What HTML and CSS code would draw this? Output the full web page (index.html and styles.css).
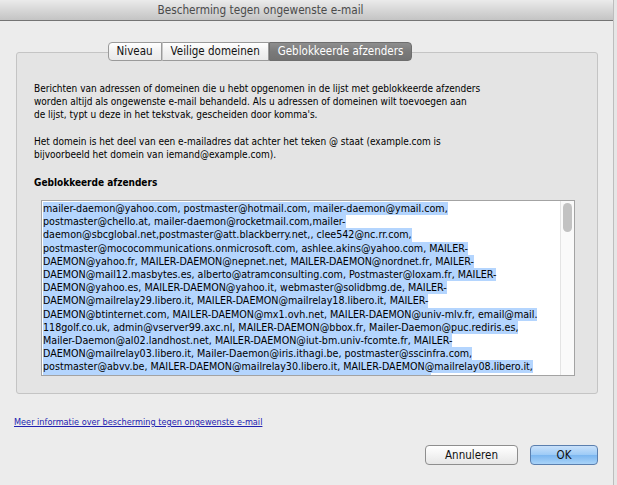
FILE: index.html
```html
<!DOCTYPE html>
<html>
<head>
<meta charset="utf-8">
<link rel="stylesheet" href="styles.css">
</head>
<body>
<div class="window">
  <div class="titlebar">Bescherming tegen ongewenste e-mail</div>
  <div class="content">
    <div class="tabbox">
      <div class="tabs">
        <div class="tab tab-first">Niveau</div>
        <div class="tab">Veilige domeinen</div>
        <div class="tab tab-selected">Geblokkeerde afzenders</div>
      </div>
      <div class="panel">
        <p class="text">Berichten van adressen of domeinen die u hebt opgenomen in de lijst met geblokkeerde afzenders<br>worden altijd als ongewenste e-mail behandeld. Als u adressen of domeinen wilt toevoegen aan<br>de lijst, typt u deze in het tekstvak, gescheiden door komma's.</p>
        <p class="text">Het domein is het deel van een e-mailadres dat achter het teken @ staat (example.com is<br>bijvoorbeeld het domein van iemand@example.com).</p>
        <h2 class="heading">Geblokkeerde afzenders</h2>
        <div class="textbox">
          <div class="lines">
            <div class="line">mailer-daemon@yahoo.com, postmaster@hotmail.com, mailer-daemon@ymail.com,</div>
            <div class="line">postmaster@chello.at, mailer-daemon@rocketmail.com,mailer-</div>
            <div class="line">daemon@sbcglobal.net,postmaster@att.blackberry.net,, clee542@nc.rr.com,</div>
            <div class="line">postmaster@mococommunications.onmicrosoft.com, ashlee.akins@yahoo.com, MAILER-</div>
            <div class="line">DAEMON@yahoo.fr, MAILER-DAEMON@nepnet.net, MAILER-DAEMON@nordnet.fr, MAILER-</div>
            <div class="line">DAEMON@mail12.masbytes.es, alberto@atramconsulting.com, Postmaster@loxam.fr, MAILER-</div>
            <div class="line">DAEMON@yahoo.es, MAILER-DAEMON@yahoo.it, webmaster@solidbmg.de, MAILER-</div>
            <div class="line">DAEMON@mailrelay29.libero.it, MAILER-DAEMON@mailrelay18.libero.it, MAILER-</div>
            <div class="line">DAEMON@btinternet.com, MAILER-DAEMON@mx1.ovh.net, MAILER-DAEMON@univ-mlv.fr, email@mail.</div>
            <div class="line">118golf.co.uk, admin@vserver99.axc.nl, MAILER-DAEMON@bbox.fr, Mailer-Daemon@puc.rediris.es,</div>
            <div class="line">Mailer-Daemon@al02.landhost.net, MAILER-DAEMON@iut-bm.univ-fcomte.fr, MAILER-</div>
            <div class="line">DAEMON@mailrelay03.libero.it, Mailer-Daemon@iris.ithagi.be, postmaster@sscinfra.com,</div>
            <div class="line">postmaster@abvv.be, MAILER-DAEMON@mailrelay30.libero.it, MAILER-DAEMON@mailrelay08.libero.it,</div>
            <div class="line">MAILER-DAEMON@crete.ctut.dnc.icl.com, MAILER-DAEMON@frontier.com, Mailer-</div>
          </div>
          <div class="scrollbar"><div class="thumb"></div></div>
        </div>
      </div>
    </div>
    <a class="link" href="#">Meer informatie over bescherming tegen ongewenste e-mail</a>
    <div class="buttons">
      <button class="btn">Annuleren</button>
      <button class="btn btn-default">OK</button>
    </div>
  </div>
</div>
</body>
</html>
```

FILE: styles.css
```css
html, body {
  margin: 0;
  padding: 0;
  background: #e6e6e6;
}
body {
  width: 617px;
  height: 485px;
  overflow: hidden;
  font-family: "DejaVu Sans Condensed", "DejaVu Sans", sans-serif;
  color: #000;
}
.window {
  width: 614px;
  height: 485px;
  background: #ececec;
  border-right: 1px solid #bdbdbd;
  box-sizing: border-box;
}
.titlebar {
  height: 21px;
  box-sizing: border-box;
  padding-right: 92px;
  border-bottom: 1px solid #747474;
  background: linear-gradient(#ebebeb, #d5d5d5 55%, #c4c4c4);
  text-align: center;
  font-size: 11.7px;
  line-height: 21px;
  color: #4a4a4a;
  border-top-right-radius: 5px;
}
.content {
  padding: 0 15px 0 16px;
}
.tabbox {
  margin-top: 31px;
  height: 342px;
  border: 1px solid #c4c4c4;
  border-radius: 3px;
  background: #e4e4e4;
  box-sizing: border-box;
}
.tabs {
  display: flex;
  justify-content: center;
  padding-right: 94px;
  margin-top: -11px;
  height: 19px;
}
.tab {
  height: 19px;
  box-sizing: border-box;
  padding: 0 8px;
  font-size: 11.5px;
  line-height: 17px;
  border: 1px solid #9a9a9a;
  border-left: 1px solid #c8c8c8;
  background: linear-gradient(#ffffff, #f1f1f1 50%, #e9e9e9);
  color: #111;
}
.tab-first {
  border-left: 1px solid #9a9a9a;
  border-radius: 4px 0 0 4px;
}
.tab-selected {
  border-color: #6e6e6e;
  border-radius: 0 4px 4px 0;
  background: linear-gradient(#8e8e8e, #7a7a7a 50%, #727272);
  color: #fff;
}
.panel {
  padding: 21px 22px 0 17px;
}
.text {
  margin: 0 0 14px 0;
  font-size: 10px;
  line-height: 13px;
}
.heading {
  margin: 15px 0 11px 0;
  font-size: 10px;
  line-height: 13px;
  font-weight: bold;
}
.textbox {
  margin-left: 7px;
  height: 176px;
  border: 1px solid #a3a3a3;
  background: #fff;
  display: flex;
  overflow: hidden;
  box-sizing: border-box;
}
.lines {
  flex: 1;
  padding: 1px 0 0 1px;
  overflow: hidden;
}
.line {
  width: fit-content;
  white-space: nowrap;
  background: #b4d5fe;
  font-size: 10.65px;
  line-height: 13.2px;
  height: 13.2px;
}
.scrollbar {
  width: 14px;
  flex: none;
  border-left: 1px solid #e4e4e4;
  background: #fafafa;
  padding: 2px 0 0 2px;
  box-sizing: border-box;
}
.thumb {
  width: 9px;
  height: 29px;
  border-radius: 5px;
  background: #c2c2c2;
}
.link {
  display: block;
  margin-top: 22px;
  margin-left: -2px;
  width: fit-content;
  font-size: 9.1px;
  line-height: 13px;
  color: #2222b0;
  text-decoration: underline;
}
.buttons {
  display: flex;
  justify-content: flex-end;
  gap: 12px;
  margin-top: 16px;
}
.btn {
  height: 20px;
  box-sizing: border-box;
  border: 1px solid #8e8e8e;
  border-radius: 4px;
  background: linear-gradient(#ffffff, #f3f3f3 50%, #e6e6e6);
  font-family: "DejaVu Sans Condensed", "DejaVu Sans", sans-serif;
  font-size: 11.5px;
  color: #111;
  padding: 0;
  width: 93px;
}
.btn-default {
  width: 68px;
  border-color: #5b7fae;
  background: linear-gradient(#c9e1fa, #9ccaf6 50%, #7bb6f0 51%, #a9d3f8);
}
```
